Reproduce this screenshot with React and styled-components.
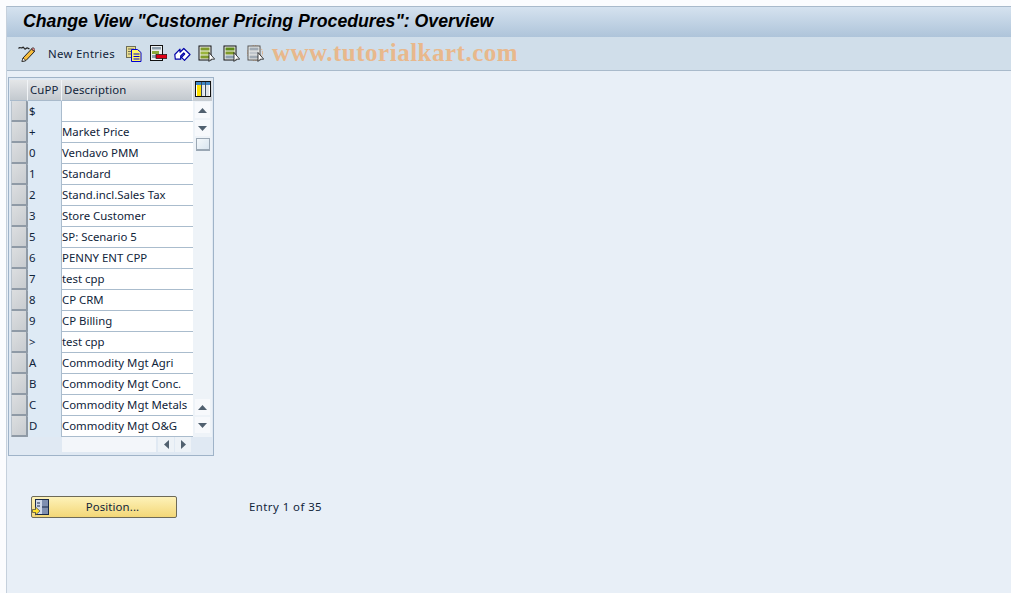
import React from 'react'
import styled, { createGlobalStyle } from 'styled-components'

const GlobalStyle = createGlobalStyle`
  html, body { margin: 0; padding: 0; height: 100%; background: #fbfcfe; overflow: hidden; }
  #root { height: 100%; }
`

const Screen = styled.div`
  width: 1011px;
  height: 593px;
  padding: 6px 0 0 6px;
  box-sizing: border-box;
  font-family: "Noto Sans", "DejaVu Sans", sans-serif;
  font-size: 11.4px;
  color: #111;
`

const Frame = styled.div`
  height: 587px;
  border-left: 1px solid #c5d0dc;
  border-top: 1px solid #a9bacb;
  background: #e8eff7;
  display: flex;
  flex-direction: column;
`

const TitleBar = styled.div`
  height: 30px;
  box-sizing: border-box;
  padding: 0 0 2px 16px;
  display: flex;
  align-items: center;
  background: linear-gradient(#d5e2ef, #aec4da);
  font-family: "Liberation Sans", Arial, sans-serif;
  font-weight: bold;
  font-style: italic;
  font-size: 17.7px;
  color: #000;
`

const Toolbar = styled.div`
  height: 34px;
  box-sizing: border-box;
  border-bottom: 1px solid #a9bacb;
  background: #d0deea;
  display: flex;
  align-items: center;
  padding-left: 11px;
`

const ToolIcon = styled.svg`
  width: 17px;
  height: 17px;
  flex: none;
  margin-right: ${p => p.$gap ?? 7}px;
`

const ToolText = styled.span`
  margin: 0 12px 0 13px;
  width: 66px;
  white-space: nowrap;
  letter-spacing: 0.3px;
  color: #10243a;
`

const Watermark = styled.span`
  margin: 0 0 2px 8px;
  font-family: "Liberation Serif", serif;
  font-weight: bold;
  font-size: 25px;
  letter-spacing: 0.5px;
  color: #e8b88c;
`

const Content = styled.div`
  flex: 1;
  padding: 6px 0 0 1px;
`

const TablePanel = styled.div`
  width: 206px;
  height: 379px;
  box-sizing: border-box;
  border: 1px solid #9fb3c8;
  background: #e0e9f3;
  padding: 2px 1px 0 1px;
  display: grid;
  grid-template-columns: 18px 34px 131px 19px;
  grid-template-rows: 21px 336px 1fr;
`

const HeadCell = styled.div`
  height: 21px;
  box-sizing: border-box;
  background: linear-gradient(#e4e6e8, #c3c9cf);
  border-right: 1px solid #f1f4f7;
  border-bottom: 1px solid #a9bacb;
  padding-left: ${p => p.$pad ?? 2}px;
  line-height: 20px;
  letter-spacing: 0.1px;
  color: #10243a;
  white-space: nowrap;
`

const ConfigCell = styled.div`
  height: 21px;
  padding-bottom: 3px;
  box-sizing: border-box;
  background: linear-gradient(#dfe3e7, #c6ccd2);
  display: flex;
  justify-content: center;
  align-items: center;
`

const Rows = styled.div`
  grid-column: 1 / 4;
  display: flex;
  flex-direction: column;
`

const Row = styled.div`
  height: 21px;
  flex: none;
  display: grid;
  grid-template-columns: 18px 34px 131px;
`

const Selector = styled.div`
  box-sizing: border-box;
  margin-left: 1px;
  width: 17px;
  border-radius: 1px;
  background: linear-gradient(135deg, #dcdee0, #c8ccd0);
  border-right: 2px solid #8f9aa6;
  border-bottom: 2px solid #8f9aa6;
  border-left: 1px solid #b8c2cc;
`

const KeyCell = styled.div`
  box-sizing: border-box;
  background: #deeaf5;
  border-right: 1px solid #aabccd;
  padding-left: 1px;
  line-height: 20px;
  color: #10243a;
`

const TextCell = styled.div`
  box-sizing: border-box;
  background: #fff;
  border-bottom: 1px solid #aabccd;
  line-height: 20px;
  color: #10243a;
  white-space: nowrap;
`

const VScroll = styled.div`
  display: flex;
  flex-direction: column;
  align-items: center;
  padding: 1px 0 4px;
  background: #eef3f8;
`

const ScrollBtn = styled.div`
  width: 15px;
  height: 16px;
  margin-bottom: ${p => p.$gap ?? 2}px;
  flex: none;
  background: #f7f9fc;
  display: flex;
  align-items: center;
  justify-content: center;
`

const Thumb = styled.div`
  width: 14px;
  height: 13px;
  box-sizing: border-box;
  flex: none;
  border: 1px solid #9aa7b4;
  border-bottom-width: 2px;
  background: linear-gradient(135deg, #f4f8fb, #d9e5f0);
`

const Spacer = styled.div`
  flex: 1;
`

const HScroll = styled.div`
  grid-column: 3 / 4;
  display: flex;
  align-items: flex-start;
  gap: 1px;
`

const HTrack = styled.div`
  width: 94px;
  height: 15px;
  background: #f3f6fa;
  margin-right: 1px;
`

const HBtn = styled.div`
  width: 16px;
  height: 15px;
  background: #edf2f7;
  display: flex;
  align-items: center;
  justify-content: center;
`

const Footer = styled.div`
  display: flex;
  align-items: center;
  margin: 40px 0 0 23px;
`

const PositionButton = styled.button`
  width: 146px;
  height: 22px;
  padding: 0;
  box-sizing: border-box;
  border: 1px solid #6d6a58;
  border-radius: 2px;
  background: linear-gradient(#fdf2b9, #f3d777);
  font: inherit;
  color: #10243a;
  display: flex;
  align-items: center;
`

const ButtonLabel = styled.span`
  flex: 1;
  text-align: center;
  padding-bottom: 2px;
  letter-spacing: 0.1px;
`

const EntryText = styled.span`
  margin: 0 0 2px 72px;
  letter-spacing: 0.45px;
  color: #10243a;
`

const rows = [
  ['$', ''],
  ['+', 'Market Price'],
  ['0', 'Vendavo PMM'],
  ['1', 'Standard'],
  ['2', 'Stand.incl.Sales Tax'],
  ['3', 'Store Customer'],
  ['5', 'SP: Scenario 5'],
  ['6', 'PENNY ENT CPP'],
  ['7', 'test cpp'],
  ['8', 'CP CRM'],
  ['9', 'CP Billing'],
  ['>', 'test cpp'],
  ['A', 'Commodity Mgt Agri'],
  ['B', 'Commodity Mgt Conc.'],
  ['C', 'Commodity Mgt Metals'],
  ['D', 'Commodity Mgt O&G'],
]

// page icon with coloured blocks and a white arrow, used three times in the toolbar
const SelectIcon = ({ top, mid, low, halo, gap }) => (
  <ToolIcon viewBox="0 0 17 17" $gap={gap}>
    {halo && <circle cx="8" cy="8" r="7.5" fill="none" stroke="#e0a878" strokeDasharray="1.5 1" />}
    <rect x="1" y="1" width="12" height="14" fill="#f0f0ec" stroke={halo ? '#555' : '#111'} />
    <rect x="2.5" y="2.5" width="9" height="3" fill={top} />
    <rect x="2.5" y="6.5" width="9" height="3" fill={mid} />
    <rect x="2.5" y="10.5" width="9" height="3" fill={low} />
    <path d="M11 7.5v9l2.3-2.3h3.4z" fill="#fff" stroke="#111" strokeWidth="0.8" />
  </ToolIcon>
)

const ArrowUp = () => (
  <svg width="9" height="5" viewBox="0 0 9 5"><path d="M0 5L4.5 0 9 5z" fill="#50606f" /></svg>
)

const ArrowDown = () => (
  <svg width="9" height="5" viewBox="0 0 9 5"><path d="M0 0l4.5 5L9 0z" fill="#50606f" /></svg>
)

const App = () => {
  return (
    <Screen>
      <GlobalStyle />
      <Frame>
        <TitleBar>Change View "Customer Pricing Procedures": Overview</TitleBar>
        <Toolbar>
          <ToolIcon viewBox="0 0 17 17" $gap={0}>
            <path d="M5 13L13.5 4l3 2.5L8 15.5 4 16.5z" fill="#f7bd3c" stroke="#222" strokeWidth="1" />
            <path d="M13.5 4l3 2.5 .5-2-2-2z" fill="#f08a8a" stroke="#222" strokeWidth="0.8" />
            <path d="M4 16.5l1-3.5 3 2.5z" fill="#fff" stroke="#222" strokeWidth="0.7" />
            <path d="M0.5 3.5C2 1 3 4 4.5 2.5S6 5.5 8 3.5s2 1 3.5 0" fill="none" stroke="#222" strokeWidth="1.2" />
          </ToolIcon>
          <ToolText>New Entries</ToolText>
          <ToolIcon viewBox="0 0 17 17">
            <rect x="0.5" y="1.5" width="9" height="11" fill="#e8dc90" stroke="#6e6e58" />
            <path d="M2 4h6M2 6.5h3M2 9h3" stroke="#6e6e58" />
            <path d="M5.5 4.5h6l3.5 3v9H5.5z" fill="#fff26a" stroke="#0000d0" />
            <path d="M7.5 9h6M7.5 11.5h6M7.5 14h6" stroke="#0000d0" />
          </ToolIcon>
          <ToolIcon viewBox="0 0 17 17">
            <rect x="0.5" y="0.5" width="12" height="15" fill="#eef1f3" stroke="#111" />
            <rect x="2" y="2" width="9" height="2.5" fill="#8fa0ad" />
            <rect x="2" y="6" width="7" height="3" fill="#8daa3a" />
            <rect x="2" y="10" width="4" height="3" fill="#8fa0ad" />
            <rect x="6" y="9.5" width="11" height="4" fill="#e00018" stroke="#111" strokeWidth="0.7" />
          </ToolIcon>
          <ToolIcon viewBox="0 0 17 17">
            <path d="M0.8 9.5L6 4.2v3L9.8 3.5 16 9.5l-5.5 5.8-3-3 3.2-3.3-1-1-3 3v3.2H1.3z" fill="#fff" stroke="#0000a8" strokeWidth="1.2" strokeLinejoin="round" />
          </ToolIcon>
          <SelectIcon top="#7f9a2a" mid="#9ab43c" low="#7f9a2a" gap={8} />
          <SelectIcon top="#5f8a18" mid="#7f9a2a" low="#8da0b0" />
          <SelectIcon top="#a0aab4" mid="#c0c6cc" low="#a0aab4" halo gap={0} />
          <Watermark>www.tutorialkart.com</Watermark>
        </Toolbar>
        <Content>
          <TablePanel>
            <HeadCell />
            <HeadCell>CuPP</HeadCell>
            <HeadCell $pad={2}>Description</HeadCell>
            <ConfigCell>
              <svg width="16" height="16" viewBox="0 0 16 16">
                <rect x="0.5" y="0.5" width="15" height="15" fill="#fff" stroke="#111" />
                <rect x="1" y="1" width="14" height="3" fill="#3f86c6" />
                <rect x="2" y="4" width="4" height="11" fill="#ffe100" />
                <rect x="7" y="4" width="2.5" height="11" fill="#dfe4ea" />
                <rect x="11" y="4" width="3" height="11" fill="#dfe4ea" />
                <path d="M6.5 1v14M10.5 1v14" stroke="#3a4a5a" />
              </svg>
            </ConfigCell>
            <Rows>
              {rows.map(([key, text]) => (
                <Row key={key + text}>
                  <Selector />
                  <KeyCell>{key}</KeyCell>
                  <TextCell>{text}</TextCell>
                </Row>
              ))}
            </Rows>
            <VScroll>
              <ScrollBtn><ArrowUp /></ScrollBtn>
              <ScrollBtn $gap={2}><ArrowDown /></ScrollBtn>
              <Thumb />
              <Spacer />
              <ScrollBtn><ArrowUp /></ScrollBtn>
              <ScrollBtn $gap={0}><ArrowDown /></ScrollBtn>
            </VScroll>
            <HScroll>
              <HTrack />
              <HBtn>
                <svg width="5" height="9" viewBox="0 0 5 9"><path d="M5 0L0 4.5 5 9z" fill="#50606f" /></svg>
              </HBtn>
              <HBtn>
                <svg width="5" height="9" viewBox="0 0 5 9"><path d="M0 0l5 4.5L0 9z" fill="#50606f" /></svg>
              </HBtn>
            </HScroll>
          </TablePanel>
          <Footer>
            <PositionButton>
              <svg width="17" height="17" viewBox="0 0 17 17" style={{ flex: 'none' }}>
                <rect x="3.5" y="0.5" width="13" height="15" fill="#cfd8ea" stroke="#1a2a4a" />
                <rect x="10" y="1" width="6" height="14" fill="#7f8fb0" />
                <path d="M10 8h6" stroke="#1a2a4a" />
                <path d="M5 4h3M5 7h3" stroke="#1a2a4a" />
                <path d="M0.5 10.5h3V8l4.5 4-4.5 4v-2.5h-3z" fill="#ffe12b" stroke="#444" strokeWidth="0.7" />
              </svg>
              <ButtonLabel>Position...</ButtonLabel>
            </PositionButton>
            <EntryText>Entry 1 of 35</EntryText>
          </Footer>
        </Content>
      </Frame>
    </Screen>
  )
}

export default App
